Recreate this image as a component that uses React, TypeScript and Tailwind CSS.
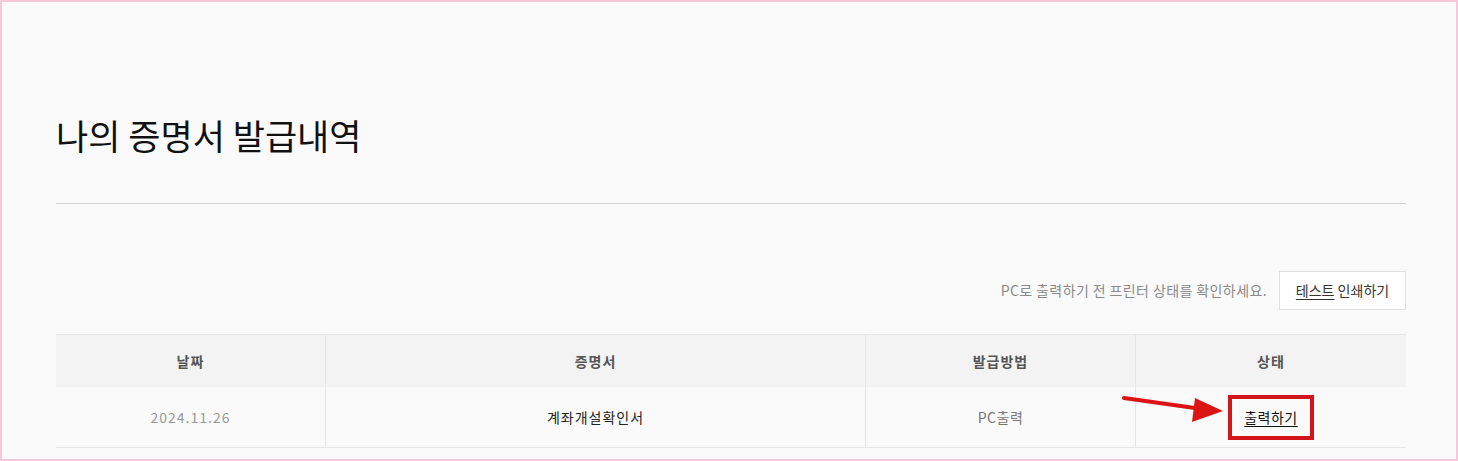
import React from "react";

export default function App() {
  return (
    <div
      className="h-[461px] w-[1458px] overflow-hidden border-2 border-[#f7c8da] bg-[#fafafa]"
      style={{ fontFamily: '"Noto Sans CJK KR", "Noto Sans", sans-serif' }}
    >
      <div className="pl-[54px] pr-[50px]">
        <h1 className="pt-[113px] text-[35px] font-normal leading-[40px] text-[#111]">
          나의 증명서 발급내역
        </h1>
        <div className="mt-[48px] h-px bg-[#d4d4d4]" />

        <div className="mt-[67px] flex items-center justify-end gap-[12px]">
          <span className="text-[14px] tracking-[0.4px] text-[#8a8a8a]">
            PC로 출력하기 전 프린터 상태를 확인하세요.
          </span>
          <button className="h-[39px] w-[127px] border border-[#e0e0e0] bg-white text-[14px] text-[#333]">
            <span className="underline underline-offset-[3px]">테스트</span> 인쇄하기
          </button>
        </div>

        <div className="mt-[24px] border-t border-[#e6e6e6]">
          <div className="grid grid-cols-[269px_540px_270px_1fr] bg-[#f3f3f3] text-[14px] font-bold tracking-[1px] text-[#555]">
            <div className="flex h-[52px] items-center justify-center">날짜</div>
            <div className="flex h-[52px] items-center justify-center border-l border-[#e6e6e6]">증명서</div>
            <div className="flex h-[52px] items-center justify-center border-l border-[#e6e6e6]">발급방법</div>
            <div className="flex h-[52px] items-center justify-center border-l border-[#e6e6e6]">상태</div>
          </div>
          <div className="grid grid-cols-[269px_540px_270px_1fr] border-b border-[#e6e6e6] text-[14px]">
            <div className="flex h-[60px] items-center justify-center tracking-[1px] text-[#999]">2024.11.26</div>
            <div className="flex h-[60px] items-center justify-center border-l border-[#e6e6e6] tracking-[1px] text-[#222]">
              계좌개설확인서
            </div>
            <div className="flex h-[60px] items-center justify-center border-l border-[#e6e6e6] tracking-[0.5px] text-[#777]">
              PC출력
            </div>
            <div className="relative flex h-[60px] items-center justify-center border-l border-[#e6e6e6]">
              <svg
                className="absolute left-[-14px] top-[6px]"
                width="104"
                height="30"
                viewBox="0 0 104 30"
              >
                <line x1="2" y1="5" x2="80" y2="16" stroke="#dd1414" strokeWidth="4" strokeLinecap="round" />
                <polygon points="73,5 101,18 70,29" fill="#dd1414" />
              </svg>
              <span className="flex h-[45px] w-[86px] items-center justify-center border-[4px] border-[#d2141c] text-[14px] tracking-[0.5px] text-[#111] underline underline-offset-[3px]">
                출력하기
              </span>
            </div>
          </div>
        </div>
      </div>
    </div>
  );
}
